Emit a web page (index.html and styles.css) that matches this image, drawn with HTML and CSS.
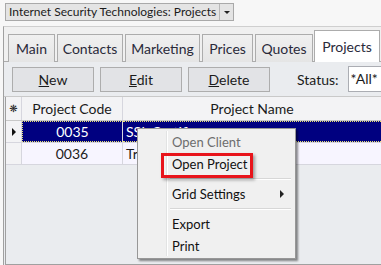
FILE: index.html
```html
<!DOCTYPE html>
<html lang="en">
<head>
  <meta charset="UTF-8">
  <title>Projects</title>
  <link rel="stylesheet" href="styles.css">
</head>
<body>
  <!-- window selector -->
  <div class="topbar">
    <div class="combo">
      <span class="combo-text">Internet Security Technologies: Projects</span>
      <span class="combo-btn"><span class="arrow-down"></span></span>
    </div>
  </div>

  <div class="panel">
    <div class="tabs">
      <div class="tab">Main</div>
      <div class="tab">Contacts</div>
      <div class="tab">Marketing</div>
      <div class="tab">Prices</div>
      <div class="tab">Quotes</div>
      <div class="tab active">Projects</div>
    </div>

    <div class="page">
      <div class="toolbar">
        <button class="btn"><u>N</u>ew</button>
        <button class="btn"><u>E</u>dit</button>
        <button class="btn"><u>D</u>elete</button>
        <span class="status-label">Status:</span>
        <div class="status-box">*All*</div>
      </div>

      <div class="grid">
        <div class="grid-row header">
          <div class="cell ind"><span class="star">&#10059;</span></div>
          <div class="cell code">Project Code</div>
          <div class="cell name center">Project Name</div>
        </div>
        <div class="grid-row selected">
          <div class="cell ind"><span class="arrow-right"></span></div>
          <div class="cell code">0035</div>
          <div class="cell name">SSL Certificate</div>
        </div>
        <div class="grid-row">
          <div class="cell ind"></div>
          <div class="cell code">0036</div>
          <div class="cell name">Training</div>
        </div>
      </div>
    </div>
  </div>

  <!-- context menu -->
  <div class="menu">
    <div class="menu-item disabled">Open Client</div>
    <div class="menu-item">Open Project</div>
    <div class="menu-sep"></div>
    <div class="menu-item">Grid Settings <span class="arrow-sub"></span></div>
    <div class="menu-sep"></div>
    <div class="menu-item">Export</div>
    <div class="menu-item">Print</div>
  </div>
  <div class="highlight"></div>
</body>
</html>
```

FILE: styles.css
```css
* {
  box-sizing: border-box;
}
body {
  margin: 0;
  width: 381px;
  height: 265px;
  overflow: hidden;
  background: #f7f7f7;
  font-family: Lato, "Noto Sans", sans-serif;
  font-size: 13px;
  color: #1b1b1b;
  position: relative;
}
/* top selector */
.topbar {
  height: 26px;
  padding: 3px 0 0 5px;
}
.combo {
  display: flex;
  width: 229px;
  height: 18px;
  background: #e4e4e4;
  border: 1px solid #a9a9a9;
}
.combo-text {
  flex: 1;
  padding-left: 3px;
  font-size: 12px;
  line-height: 16px;
  white-space: nowrap;
}
.combo-btn {
  width: 14px;
  border-left: 1px solid #b8b8b8;
  display: flex;
  align-items: center;
  justify-content: center;
}
.arrow-down {
  border-left: 3px solid transparent;
  border-right: 3px solid transparent;
  border-top: 3px solid #222;
}
/* main panel */
.panel {
  margin-left: 3px;
  height: 239px;
  border-left: 1px solid #a0a0a0;
  border-top: 1px solid #cfcfcf;
  background: #f0f0f0;
  display: flex;
  flex-direction: column;
}
.tabs {
  height: 35px;
  display: flex;
  align-items: flex-end;
  gap: 2px;
  padding-left: 4px;
  border-bottom: 1px solid #acacac;
}
.tab {
  height: 28px;
  margin-bottom: -1px;
  display: flex;
  align-items: center;
  justify-content: center;
  font-size: 14px;
  color: #2a2a3a;
  background: linear-gradient(#f0f0f0, #e5e5e5);
  border: 1px solid #acacac;
  border-bottom: none;
}
.tab:nth-child(1) { width: 47px; }
.tab:nth-child(2) { width: 66px; }
.tab:nth-child(3) { width: 75px; }
.tab:nth-child(4) { width: 51px; }
.tab:nth-child(5) { width: 58px; }
.tab.active {
  width: 66px;
  height: 32px;
  margin-left: -1px;
  background: #ffffff;
}
.page {
  flex: 1;
  background: #eaecef;
  display: flex;
  flex-direction: column;
}
/* toolbar */
.toolbar {
  height: 35px;
  display: flex;
  align-items: center;
  gap: 6px;
  padding: 0 0 0 8px;
  border-bottom: 1px solid #c9c9c9;
}
.btn {
  width: 82px;
  height: 25px;
  background: #e2e3e6;
  border: 1px solid #adadad;
  font-family: inherit;
  font-size: 14px;
  color: #1b1b1b;
  padding: 0;
}
.status-label {
  margin-left: 21px;
  font-size: 14px;
}
.status-box {
  margin-left: 3px;
  flex: 1;
  height: 26px;
  background: #ffffff;
  border: 1px solid #abadb3;
  border-right: none;
  padding-left: 2px;
  font-size: 14px;
  line-height: 24px;
}
/* grid */
.grid {
  flex: 1;
  margin-left: 1px;
  border-left: 1px solid #a0a0a0;
  border-bottom: 1px solid #a0a0a0;
}
.grid-row {
  display: flex;
  height: 22px;
  background: #f7f5ff;
  border-bottom: 1px solid #d6d6de;
}
.grid-row.header {
  height: 24px;
  background: #f3f3f5;
  border-bottom: 1px solid #c8c8c8;
}
.cell {
  display: flex;
  align-items: center;
  white-space: nowrap;
  overflow: hidden;
  font-size: 14px;
  border-right: 1px solid #d6d6de;
}
.cell.ind {
  width: 16px;
  justify-content: center;
  background: #f3f3f5;
}
.star {
  font-family: "DejaVu Sans", sans-serif;
  font-size: 10px;
  color: #222;
}
.cell.code {
  width: 101px;
  justify-content: center;
}
.cell.name {
  flex: 1;
  padding-left: 3px;
  border-right: none;
}
.cell.name.center {
  justify-content: center;
  padding-left: 0;
}
.grid-row.selected .code,
.grid-row.selected .name {
  background: #000080;
  color: #ffffff;
  border-top: 1px dotted #e8e070;
  border-bottom: 1px dotted #e8e070;
}
.grid-row.selected .code {
  border-left: 1px dotted #e8e070;
}
.arrow-right {
  border-top: 4px solid transparent;
  border-bottom: 4px solid transparent;
  border-left: 4px solid #111;
}
/* context menu */
.menu {
  position: absolute;
  left: 137px;
  top: 128px;
  width: 159px;
  height: 131px;
  padding: 2px;
  background: #f0f0f0;
  border: 1px solid #979797;
  box-shadow: 2px 2px 2px rgba(0, 0, 0, 0.45);
  font-size: 13px;
}
.menu::before {
  content: "";
  position: absolute;
  left: 28px;
  top: 2px;
  bottom: 2px;
  width: 1px;
  background: #e2e3e3;
  border-right: 1px solid #ffffff;
}
.menu-item {
  height: 22px;
  padding-left: 32px;
  display: flex;
  align-items: center;
  color: #111;
  position: relative;
}
.menu-item.disabled {
  color: #6d6d6d;
}
.menu-sep {
  height: 8px;
  margin-left: 30px;
  position: relative;
}
.menu-sep::after {
  content: "";
  position: absolute;
  left: 0;
  right: 2px;
  top: 3px;
  height: 1px;
  background: #d7d7d7;
  border-bottom: 1px solid #ffffff;
}
.arrow-sub {
  position: absolute;
  right: 9px;
  top: 7px;
  border-top: 4px solid transparent;
  border-bottom: 4px solid transparent;
  border-left: 4px solid #222;
}
.highlight {
  position: absolute;
  left: 161px;
  top: 153px;
  width: 92px;
  height: 25px;
  border: 3px solid #e8141b;
  box-shadow: 2px 2px 3px rgba(0, 0, 0, 0.35);
}
```
